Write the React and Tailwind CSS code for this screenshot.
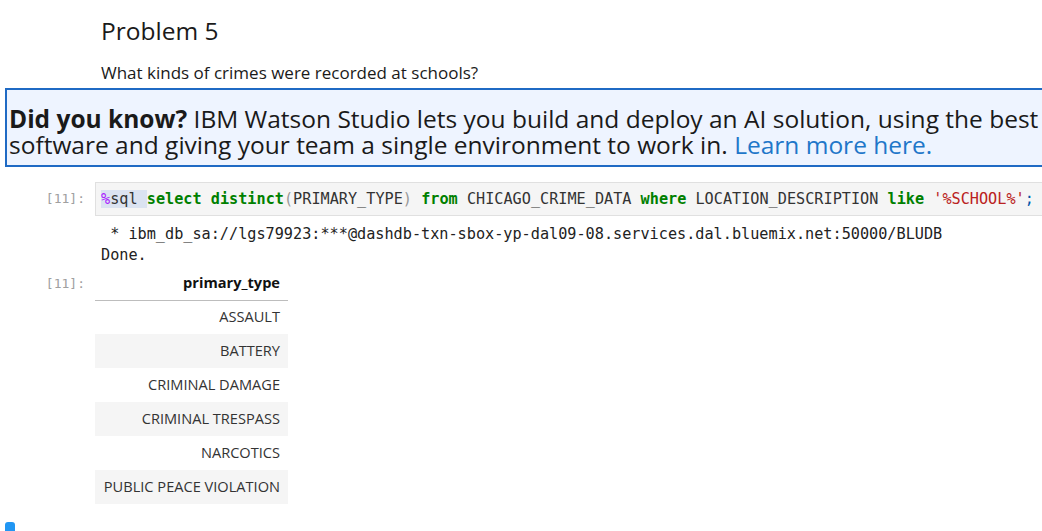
import React from "react";

const rows = [
  "ASSAULT",
  "BATTERY",
  "CRIMINAL DAMAGE",
  "CRIMINAL TRESPASS",
  "NARCOTICS",
  "PUBLIC PEACE VIOLATION",
];

const Prompt = ({ children, className = "" }) => (
  <div
    className={`w-[95px] shrink-0 pr-[10px] text-right font-['DejaVu_Sans_Mono',monospace] text-[13px] text-[#a0a0a0] ${className}`}
  >
    {children}
  </div>
);

const Kw = ({ children }) => (
  <span className="font-bold text-[#008000]">{children}</span>
);

const App = () => {
  return (
    <div className="relative h-[531px] w-[1042px] overflow-hidden bg-white font-['Open_Sans',sans-serif] text-[#212121]">
      {/* markdown cell */}
      <div className="pl-[101px] pt-[16px]">
        <h2 className="text-[24.5px] leading-[30px] font-normal text-[#1a1a1a]">
          Problem 5
        </h2>
        <p className="mt-[17px] text-[17px] leading-[20px] text-[#1a1a1a]">
          What kinds of crimes were recorded at schools?
        </p>
      </div>

      {/* alert box */}
      <div className="ml-[5px] mt-[5px] w-[1100px] border-2 border-[#1f6ac4] bg-[#eef4ff] pl-[2px] pt-[16px] pb-[7px] text-[24.5px] leading-[26px] whitespace-nowrap text-[#1a1a1a]">
        <span className="font-bold">Did you know?</span> IBM Watson Studio lets
        you build and deploy an AI solution, using the best
        <br />
        software and giving your team a single environment to work in.{" "}
        <span className="text-[#1f77c9]">Learn more here.</span>
      </div>

      {/* code cell */}
      <div className="mt-[15px] flex items-center">
        <Prompt>[11]:</Prompt>
        <div className="w-[1000px] shrink-0 border border-[#e0e0e0] bg-[#f5f5f5] py-[5px] pl-[5px] font-['DejaVu_Sans_Mono',monospace] text-[15.2px] leading-[22px] whitespace-pre text-[#333]">
          <span className="bg-[#dbe3f1]">
            <span className="text-[#aa22ff]">%</span>sql{" "}
          </span>
          <Kw>select</Kw> <Kw>distinct</Kw>
          <span className="text-[#999]">(</span>PRIMARY_TYPE
          <span className="text-[#999]">)</span> <Kw>from</Kw>{" "}
          CHICAGO_CRIME_DATA <Kw>where</Kw> LOCATION_DESCRIPTION <Kw>like</Kw>{" "}
          <span className="text-[#ba2121]">'%SCHOOL%'</span>
          <span className="text-[#0055aa]">;</span>
        </div>
      </div>

      {/* stream output */}
      <div className="mt-[8px] flex">
        <div className="w-[95px] shrink-0" />
        <div className="pl-[6px] font-['DejaVu_Sans_Mono',monospace] text-[15.2px] leading-[21px] whitespace-pre text-[#222]">
          {" * ibm_db_sa://lgs79923:***@dashdb-txn-sbox-yp-dal09-08.services.dal.bluemix.net:50000/BLUDB"}
          {"\nDone."}
        </div>
      </div>

      {/* result table */}
      <div className="mt-[1px] flex">
        <Prompt className="pt-[7px] leading-[20px]">[11]:</Prompt>
        <table className="w-[193px] border-collapse text-[14.6px] text-[#333]">
          <thead>
            <tr className="h-[33px] border-b border-[#bdbdbd]">
              <th className="px-[8px] text-right font-bold text-[#111]">
                primary_type
              </th>
            </tr>
          </thead>
          <tbody>
            {rows.map((r, i) => (
              <tr
                key={r}
                className={`h-[34px] ${i % 2 === 1 ? "bg-[#f5f5f5]" : "bg-white"}`}
              >
                <td className="px-[8px] text-right whitespace-nowrap">{r}</td>
              </tr>
            ))}
          </tbody>
        </table>
      </div>

      {/* next cell selection marker */}
      <div className="ml-[5px] mt-[18px] h-[12px] w-[10px] rounded-t-[3px] bg-[#2196f3]" />
    </div>
  );
};

export default App;
